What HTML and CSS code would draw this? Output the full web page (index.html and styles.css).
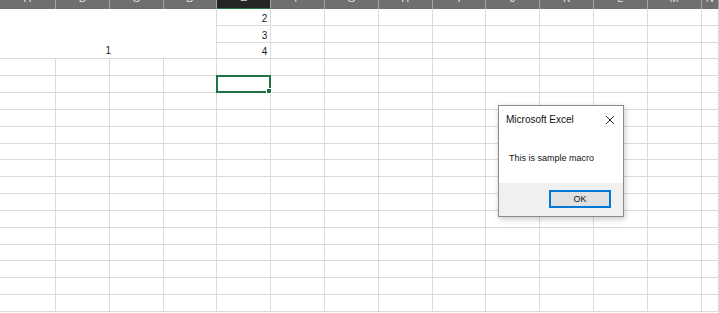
FILE: index.html
```html
<!DOCTYPE html>
<html>
<head>
<meta charset="utf-8">
<link rel="stylesheet" href="styles.css">
</head>
<body>
<div class="sheet">
  <div class="hd"><span>A</span></div><div class="hd"><span>B</span></div><div class="hd"><span>C</span></div><div class="hd"><span>D</span></div><div class="hd on"><span>E</span></div><div class="hd"><span>F</span></div><div class="hd"><span>G</span></div><div class="hd"><span>H</span></div><div class="hd"><span>I</span></div><div class="hd"><span>J</span></div><div class="hd"><span>K</span></div><div class="hd"><span>L</span></div><div class="hd"><span>M</span></div><div class="hd"><span>N</span></div>
  <div class="c merged">1</div><div class="c num">2</div><i></i><i></i><i></i><i></i><i></i><i></i><i></i><i></i><i></i>
  <div class="c num">3</div><i></i><i></i><i></i><i></i><i></i><i></i><i></i><i></i><i></i>
  <div class="c num">4</div><i></i><i></i><i></i><i></i><i></i><i></i><i></i><i></i><i></i>
  <i></i><i></i><i></i><i></i><i></i><i></i><i></i><i></i><i></i><i></i><i></i><i></i><i></i><i></i>
  <i></i><i></i><i></i><i></i><i class="sel"></i><i></i><i></i><i></i><i></i><i></i><i></i><i></i><i></i><i></i>
  <i></i><i></i><i></i><i></i><i></i><i></i><i></i><i></i><i></i><i></i><i></i><i></i><i></i><i></i>
  <i></i><i></i><i></i><i></i><i></i><i></i><i></i><i></i><i></i><i></i><i></i><i></i><i></i><i></i>
  <i></i><i></i><i></i><i></i><i></i><i></i><i></i><i></i><i></i><i></i><i></i><i></i><i></i><i></i>
  <i></i><i></i><i></i><i></i><i></i><i></i><i></i><i></i><i></i><i></i><i></i><i></i><i></i><i></i>
  <i></i><i></i><i></i><i></i><i></i><i></i><i></i><i></i><i></i><i></i><i></i><i></i><i></i><i></i>
  <i></i><i></i><i></i><i></i><i></i><i></i><i></i><i></i><i></i><i></i><i></i><i></i><i></i><i></i>
  <i></i><i></i><i></i><i></i><i></i><i></i><i></i><i></i><i></i><i></i><i></i><i></i><i></i><i></i>
  <i></i><i></i><i></i><i></i><i></i><i></i><i></i><i></i><i></i><i></i><i></i><i></i><i></i><i></i>
  <i></i><i></i><i></i><i></i><i></i><i></i><i></i><i></i><i></i><i></i><i></i><i></i><i></i><i></i>
  <i></i><i></i><i></i><i></i><i></i><i></i><i></i><i></i><i></i><i></i><i></i><i></i><i></i><i></i>
  <i></i><i></i><i></i><i></i><i></i><i></i><i></i><i></i><i></i><i></i><i></i><i></i><i></i><i></i>
  <i></i><i></i><i></i><i></i><i></i><i></i><i></i><i></i><i></i><i></i><i></i><i></i><i></i><i></i>
  <i></i><i></i><i></i><i></i><i></i><i></i><i></i><i></i><i></i><i></i><i></i><i></i><i></i><i></i>
</div>

<div class="dialog">
  <div class="title">
    <span>Microsoft Excel</span>
    <svg class="close" width="10" height="10" viewBox="0 0 10 10"><path d="M1 1 L9 9 M9 1 L1 9" stroke="#222" stroke-width="1" fill="none"/></svg>
  </div>
  <div class="body">This is sample macro</div>
  <div class="foot"><button class="ok">OK</button></div>
</div>
</body>
</html>
```
FILE: styles.css
```css
html, body {
  margin: 0;
  padding: 0;
  background: #ffffff;
  overflow: hidden;
}
body {
  width: 719px;
  height: 313px;
  font-family: "Liberation Sans", Arial, sans-serif;
}
.sheet {
  display: grid;
  grid-template-columns: 56px repeat(12, 53.8px) 1fr;
  grid-template-rows: 9px repeat(18, 16.83px);
}
.hd {
  background: #6f6f6f;
  border-right: 1px solid #a3a3a3;
  box-sizing: border-box;
  overflow: hidden;
  display: flex;
  align-items: flex-end;
  justify-content: center;
  color: #e0e0e0;
  font-size: 11px;
}
.hd span {
  line-height: 12px;
  margin-bottom: 5px;
}
.hd.on {
  background: #242424;
  border-bottom: 1px solid #217346;
  color: #d8d8d8;
}
.sheet i, .c {
  display: block;
  box-sizing: border-box;
  border-right: 1px solid #dadada;
  border-bottom: 1px solid #dadada;
  background: #fff;
}
.c {
  display: flex;
  align-items: flex-end;
  font-size: 10px;
  line-height: 12px;
  color: #1a1a1a;
}
.num {
  justify-content: flex-end;
  padding-right: 3px;
}
.merged {
  grid-column: span 4;
  grid-row: span 3;
  justify-content: center;
  padding-bottom: 1px;
}
.sheet i.sel {
  position: relative;
}
.sel::after {
  content: "";
  position: absolute;
  left: -1.5px;
  top: -1.5px;
  right: -1px;
  bottom: -1px;
  border: 2px solid #217346;
}
.sel::before {
  content: "";
  position: absolute;
  right: -2px;
  bottom: -2px;
  width: 4px;
  height: 4px;
  background: #217346;
  border: 1px solid #fff;
  z-index: 2;
}
.dialog {
  position: absolute;
  left: 498px;
  top: 105px;
  width: 126px;
  height: 112px;
  box-sizing: border-box;
  border: 1px solid #8c8c8c;
  background: #fff;
  box-shadow: 1px 2px 6px rgba(0,0,0,0.22);
  display: flex;
  flex-direction: column;
}
.title {
  height: 27px;
  display: flex;
  align-items: center;
  justify-content: space-between;
  padding: 0 8px 0 7px;
  font-size: 10px;
  color: #111;
}
.close {
  display: block;
}
.body {
  flex: 1;
  display: flex;
  align-items: center;
  padding-left: 10px;
  font-size: 9px;
  color: #111;
}
.foot {
  height: 33px;
  background: #f0f0f0;
  display: flex;
  justify-content: flex-end;
  align-items: flex-start;
  padding: 7px 12px 0 0;
  box-sizing: border-box;
}
.ok {
  width: 62px;
  height: 18px;
  box-sizing: border-box;
  border: 2px solid #0078d7;
  background: #e1e1e1;
  font-family: "Liberation Sans", Arial, sans-serif;
  font-size: 9px;
  color: #111;
  padding: 0;
  margin: 0;
}
```
